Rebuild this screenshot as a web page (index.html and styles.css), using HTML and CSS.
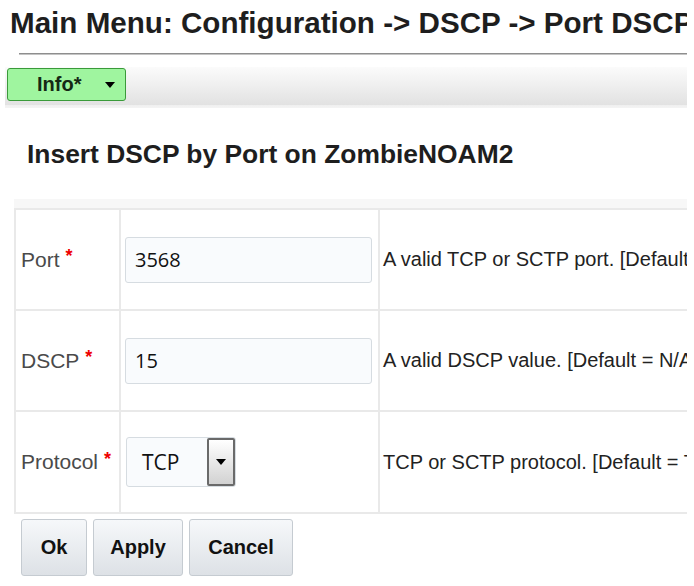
FILE: index.html
```html
<!DOCTYPE html>
<html>
<head>
<meta charset="utf-8">
<link rel="stylesheet" href="styles.css">
</head>
<body>
<div class="page">
  <h1 class="title">Main Menu: Configuration -&gt; DSCP -&gt; Port DSCP</h1>
  <div class="rule"></div>
  <div class="toolbar">
    <div class="info-btn"><span>Info*</span><span class="tri"></span></div>
  </div>
  <h2 class="heading">Insert DSCP by Port on ZombieNOAM2</h2>
  <div class="band"></div>
  <div class="form-grid">
    <div class="cell label">Port<span class="req">*</span></div>
    <div class="cell field"><div class="input">3568</div></div>
    <div class="cell desc">A valid TCP or SCTP port. [Default = N/A; Range = 1-65535]</div>

    <div class="cell label">DSCP<span class="req">*</span></div>
    <div class="cell field"><div class="input">15</div></div>
    <div class="cell desc">A valid DSCP value. [Default = N/A; Range = 0-63]</div>

    <div class="cell label">Protocol<span class="req">*</span></div>
    <div class="cell field">
      <div class="select"><span class="sel-text">TCP</span><span class="sel-btn"><span class="tri"></span></span></div>
    </div>
    <div class="cell desc">TCP or SCTP protocol. [Default = TCP]</div>
  </div>
  <div class="buttons">
    <div class="btn btn-ok">Ok</div>
    <div class="btn btn-apply">Apply</div>
    <div class="btn btn-cancel">Cancel</div>
  </div>
</div>
</body>
</html>
```
FILE: styles.css
```css
html, body {
  margin: 0;
  padding: 0;
  background: #ffffff;
}
body {
  font-family: "Liberation Sans", Arial, sans-serif;
  color: #222;
}
.page {
  width: 687px;
  height: 586px;
  overflow: hidden;
}
.title {
  margin: 0;
  padding: 5px 0 0 10px;
  font-size: 29.6px;
  line-height: 36px;
  font-weight: bold;
  color: #1e1e1e;
  white-space: nowrap;
}
.rule {
  margin: 12px 0 0 19px;
  height: 0;
  border-top: 1px solid #8e8e8e;
  border-bottom: 1px solid #c4c4c4;
}
.toolbar {
  margin: 12px 0 0 5px;
  height: 41px;
  box-sizing: border-box;
  padding: 1px 2px 0;
  background: linear-gradient(#fbfbfb, #e2e2e2 92%, #efefef 93%, #f4f4f4);
}
.info-btn {
  width: 119px;
  height: 33px;
  box-sizing: border-box;
  border: 1px solid #3a9a3a;
  border-radius: 3px;
  background: #9ff59f;
  display: flex;
  align-items: center;
  padding-left: 29px;
  font-size: 20px;
  font-weight: bold;
  color: #152815;
}
.info-btn .tri {
  margin-left: 24px;
}
.tri {
  display: inline-block;
  width: 0;
  height: 0;
  border-left: 5px solid transparent;
  border-right: 5px solid transparent;
  border-top: 6px solid #000;
}
.heading {
  margin: 31px 0 0;
  padding-left: 27px;
  font-size: 26.4px;
  line-height: 30px;
  font-weight: bold;
  color: #1e1e1e;
  white-space: nowrap;
}
.band {
  margin: 30px 0 0 14px;
  width: 900px;
  height: 9px;
  background: #f7f7f7;
}
.form-grid {
  margin-left: 14px;
  width: 900px;
  display: grid;
  grid-template-columns: 103px 257px 1fr;
  grid-template-rows: 99px 99px 100px;
  gap: 2px;
  padding: 2px;
  background: #e9e9e9;
}
.cell {
  background: #ffffff;
  display: flex;
  align-items: center;
  white-space: nowrap;
}
.label {
  padding-left: 5px;
  font-size: 21px;
  color: #4a4a4a;
}
.req {
  color: #ee0000;
  font-weight: bold;
  font-size: 18px;
  margin-left: 6px;
  position: relative;
  top: -3px;
}
.field {
  padding-left: 4px;
}
.input {
  width: 247px;
  height: 46px;
  box-sizing: border-box;
  border: 1px solid #d6dce1;
  border-radius: 3px;
  background: #f9fbfd;
  padding-left: 9px;
  display: flex;
  align-items: center;
  font-family: "Open Sans", sans-serif;
  font-size: 20px;
  color: #111;
}
.select {
  margin-left: 1px;
  width: 110px;
  height: 50px;
  box-sizing: border-box;
  border: 1px solid #d6dce1;
  border-radius: 3px;
  background: #f9fbfd;
  display: flex;
  align-items: center;
  justify-content: space-between;
  padding-left: 15px;
}
.sel-text {
  font-family: "Open Sans", sans-serif;
  font-size: 21px;
  color: #111;
}
.sel-btn {
  width: 28px;
  height: 48px;
  box-sizing: border-box;
  border: 2px solid #6a6a6a;
  border-radius: 2px;
  background: linear-gradient(#ffffff, #d2d2d2);
  display: flex;
  align-items: center;
  justify-content: center;
}
.desc {
  padding-left: 3px;
  font-size: 20px;
  color: #222;
}
.buttons {
  margin: 5px 0 0 21px;
  display: flex;
  gap: 6px;
}
.btn {
  height: 57px;
  box-sizing: border-box;
  border: 1px solid #c5cbd1;
  border-radius: 3px;
  background: linear-gradient(#f6f8fa, #dde1e6);
  display: flex;
  align-items: center;
  justify-content: center;
  font-size: 20px;
  font-weight: bold;
  color: #111;
}
.btn-ok { width: 66px; }
.btn-apply { width: 90px; }
.btn-cancel { width: 104px; }
```
